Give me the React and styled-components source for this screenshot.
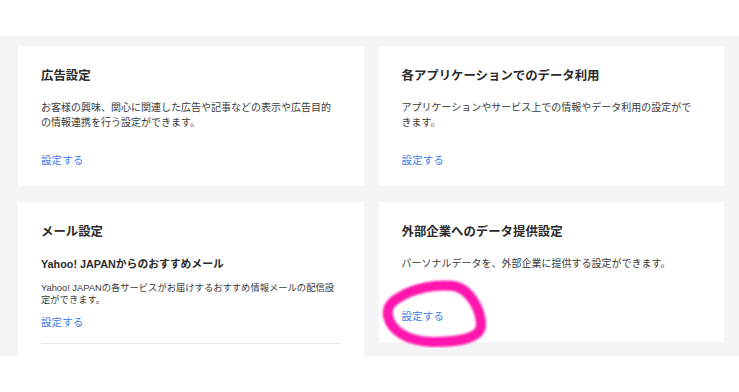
import React from 'react'
import styled, { createGlobalStyle } from 'styled-components'

const GlobalStyle = createGlobalStyle`
  html, body {
    margin: 0;
    padding: 0;
    background: #fff;
  }
  body {
    font-family: "Liberation Sans", "Noto Sans CJK JP", sans-serif;
  }
`

function App() {
  return (
    <Page>
      <GlobalStyle />
      <TopSpace />
      <Panel>
        <Card>
          <Title>広告設定</Title>
          <Desc>お客様の興味、関心に関連した広告や記事などの表示や広告目的の情報連携を行う設定ができます。</Desc>
          <Action href="#" $pushed>設定する</Action>
        </Card>
        <Card>
          <Title>各アプリケーションでのデータ利用</Title>
          <Desc>アプリケーションやサービス上での情報やデータ利用の設定ができます。</Desc>
          <Action href="#" $pushed>設定する</Action>
        </Card>
        <Card $tail>
          <Title>メール設定</Title>
          <SubTitle>Yahoo! JAPANからのおすすめメール</SubTitle>
          <SmallDesc>Yahoo! JAPANの各サービスがお届けするおすすめ情報メールの配信設定ができます。</SmallDesc>
          <Action href="#">設定する</Action>
          <Divider />
        </Card>
        <Card>
          <Title>外部企業へのデータ提供設定</Title>
          <Desc>パーソナルデータを、外部企業に提供する設定ができます。</Desc>
          <Action href="#" $pushed>設定する</Action>
        </Card>
      </Panel>
      <Marker width="739" height="392" viewBox="0 0 739 392">
        <defs>
          <filter id="soft" x="-10%" y="-10%" width="120%" height="120%">
            <feGaussianBlur stdDeviation="1.1" />
          </filter>
        </defs>
        <path
          d="M397 299 C412 288 436 284 454 286 C470 289 481 310 481 325 C481 338 460 342 432 342 C406 341 391 330 388 316 C386 305 394 299 408 293"
          fill="none"
          stroke="#ff17ae"
          strokeWidth="10"
          strokeLinecap="round"
          strokeLinejoin="round"
          filter="url(#soft)"
        />
      </Marker>
    </Page>
  )
}

const Page = styled.div`
  position: relative;
  width: 739px;
  height: 392px;
  overflow: hidden;
  background: #fff;
`

const TopSpace = styled.div`
  height: 36px;
`

const Panel = styled.main`
  display: grid;
  grid-template-columns: 1fr 1fr;
  column-gap: 15px;
  row-gap: 16px;
  align-items: start;
  padding: 10px 15px 0 18px;
  background: #f5f5f8;
`

const Card = styled.section`
  display: flex;
  flex-direction: column;
  box-sizing: border-box;
  min-height: 140px;
  padding: ${p => (p.$tail ? '22px 24px 12px 23px' : '22px 24px 18px 23px')};
  background: #fff;
`

const Title = styled.h2`
  margin: 0;
  font-size: 12.4px;
  line-height: 16px;
  font-weight: 700;
  color: #2b2b2b;
`

const SubTitle = styled.h3`
  margin: 16px 0 0;
  font-size: 10.8px;
  line-height: 16px;
  font-weight: 700;
  color: #2b2b2b;
`

const Desc = styled.p`
  margin: 15.5px 0 0;
  font-size: 10px;
  line-height: 15px;
  color: #3a3a3a;
`

const SmallDesc = styled.p`
  margin: 10px 0 0;
  font-size: 9.3px;
  line-height: 12px;
  color: #3a3a3a;
`

const Action = styled.a`
  display: block;
  margin-top: ${p => (p.$pushed ? 'auto' : '8px')};
  font-size: 10.6px;
  line-height: 16px;
  color: #3b7de9;
  text-decoration: none;
`

const Divider = styled.hr`
  margin: 13px 0 0;
  border: 0;
  height: 1px;
  background: #e6e6e8;
`

const Marker = styled.svg`
  position: absolute;
  top: 0;
  left: 0;
  pointer-events: none;
`

export default App
